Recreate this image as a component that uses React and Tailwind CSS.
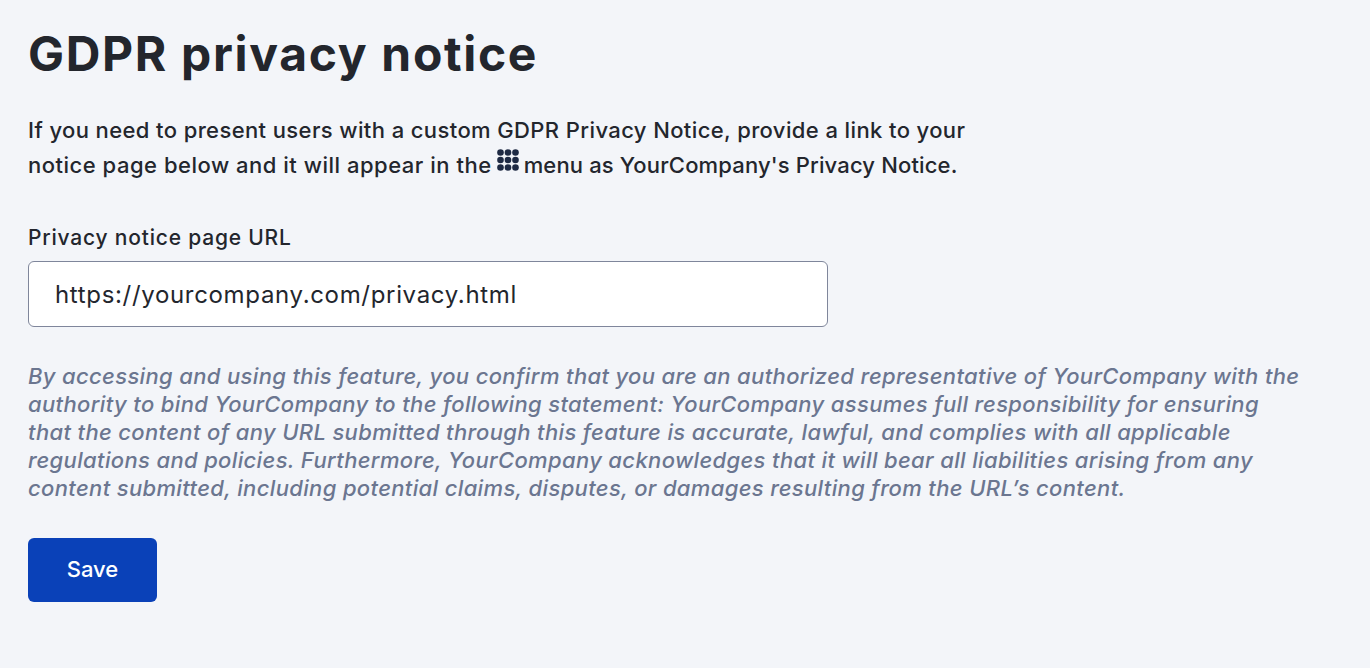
const dots = [3.5, 11, 18.5];

const MenuDots = () => (
  <svg width="22" height="22" viewBox="0 0 22 22" className="inline-block align-baseline mx-[5px] relative top-[-2px]">
    {dots.map((y) =>
      dots.map((x) => <circle key={`${x}-${y}`} cx={x} cy={y} r="3.3" fill="#1e2a44" />)
    )}
  </svg>
);

export default function App() {
  return (
    <div className="min-h-[668px] bg-[#f3f5f9] px-7 pt-[21px] text-[#23262d] font-['Inter','Noto_Sans',sans-serif]">
      <h1 className="text-[48px] leading-[66px] font-bold tracking-[1.67px]">GDPR privacy notice</h1>
      <p className="mt-[26px] text-[22px] leading-[35px] font-medium tracking-[0.39px]">
        If you need to present users with a custom GDPR Privacy Notice, provide a link to your
        <br />
        <span className="tracking-[0.51px]">notice page below and it will appear in the</span>
        <MenuDots />
        <span className="tracking-[0.15px]">menu as YourCompany's Privacy Notice.</span>
      </p>
      <label className="block mt-[40px] text-[21px] leading-[30px] font-medium tracking-[0.8px]">Privacy notice page URL</label>
      <input
        readOnly
        value="https://yourcompany.com/privacy.html"
        className="block mt-[8px] w-[800px] h-[66px] px-[26px] bg-white border border-[#7f869b] rounded-[6px] text-[24px] tracking-[0.67px] text-[#23262d] outline-none"
      />
      <p className="mt-[35px] w-[1275px] text-[22px] leading-[28px] italic font-medium tracking-[0.35px] text-[#6b7690]">
        By accessing and using this feature, you confirm that you are an authorized representative of YourCompany with the authority to bind YourCompany to the following statement: YourCompany assumes full responsibility for ensuring that the content of any URL submitted through this feature is accurate, lawful, and complies with all applicable regulations and policies. Furthermore, YourCompany acknowledges that it will bear all liabilities arising from any content submitted, including potential claims, disputes, or damages resulting from the URL’s content.
      </p>
      <button className="block mt-[36px] w-[129px] h-[64px] pb-[2px] bg-[#0a41b8] text-white rounded-[6px] text-[22px] font-medium">Save</button>
    </div>
  );
}
